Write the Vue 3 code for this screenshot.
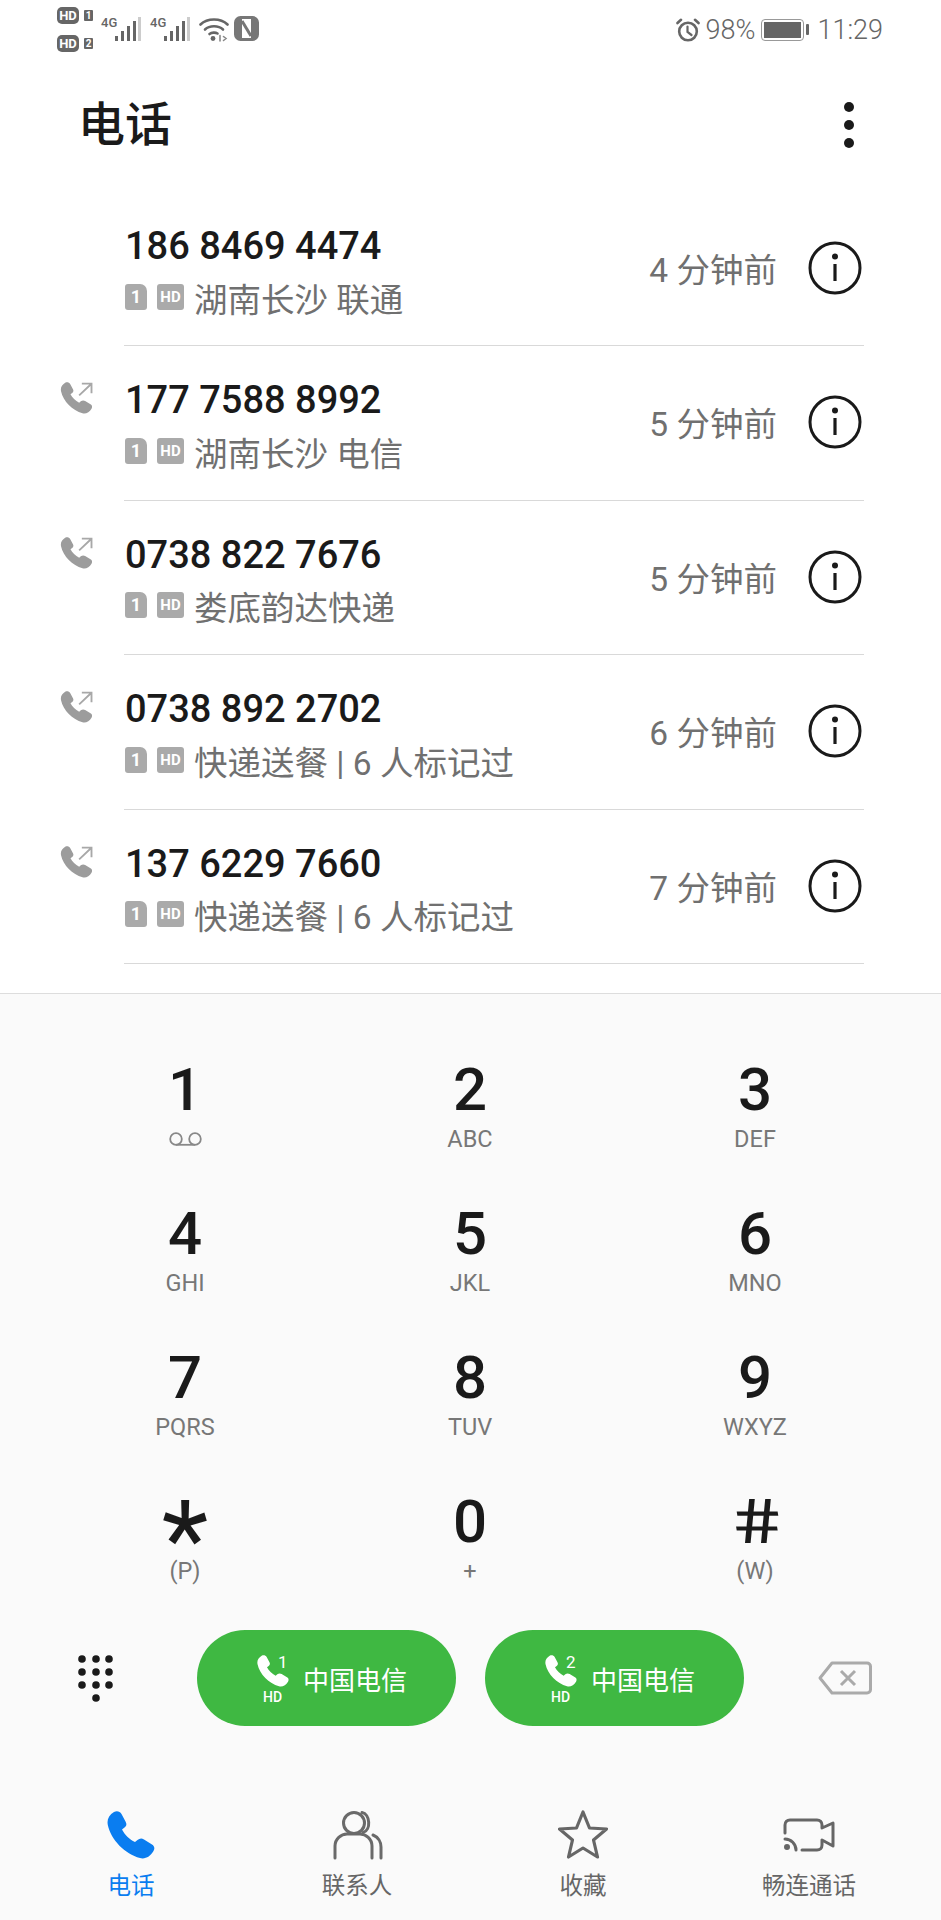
<template>
  <div class="page">
    <div class="status">
      <div class="status-left">
        <div class="hd-col">
          <div class="hd-line"><span class="hd-pill">HD</span><span class="hd-num">1</span></div>
          <div class="hd-line"><span class="hd-pill">HD</span><span class="hd-num">2</span></div>
        </div>
        <div v-for="n in 2" :key="n" class="signal">
          <span class="signal-label">4G</span>
          <svg width="26" height="24" viewBox="0 0 26 24">
            <rect x="0" y="19" width="3" height="5" fill="#666" />
            <rect x="6" y="14" width="3" height="10" fill="#666" />
            <rect x="12" y="9" width="3" height="15" fill="#666" />
            <rect x="18" y="4" width="3" height="20" fill="#666" />
            <rect x="23" y="0" width="3" height="24" fill="#ccc" />
          </svg>
        </div>
        <svg class="wifi" width="30" height="25" viewBox="0 0 30 25" fill="none" stroke="#666" stroke-width="2.6" stroke-linecap="round">
          <path d="M1.5 7.5C8.5 .8 21.5 .8 28.5 7.5" />
          <path d="M6 12.5C10.5 8.2 19.5 8.2 24 12.5" />
          <path d="M10.5 17C12.8 15.2 16.5 15.2 18.5 16.5" />
          <circle cx="14" cy="21.5" r="2.4" fill="#666" stroke="none" />
          <path d="M21 18.5V24M24.5 19.5L27 21.5L24.5 23.5" stroke-width="1.6" stroke="#888" />
        </svg>
        <svg class="nfc" width="25" height="25" viewBox="0 0 25 25" fill="none">
          <rect x="1.5" y="1.5" width="22" height="22" rx="5" stroke="#777" stroke-width="3" />
          <rect x="3" y="3" width="5" height="19" fill="#777" />
          <rect x="17" y="3" width="5" height="19" fill="#777" />
          <path d="M8 5L17 20" stroke="#777" stroke-width="3" />
        </svg>
      </div>
      <div class="status-right">
        <svg width="24" height="24" viewBox="0 0 24 24" fill="none" stroke="#666" stroke-width="2.6" stroke-linecap="round">
          <circle cx="12" cy="13.5" r="8.8" />
          <path d="M11.5 8.5V14L15.5 17" stroke-width="2.2" />
          <path d="M1.5 5L5 1.8M22.5 5L19 1.8" />
        </svg>
        <span class="pct">98%</span>
        <div class="battery"><div class="battery-fill" /></div>
        <span class="clock">11:29</span>
      </div>
    </div>

    <div class="top-bar">
      <div class="title">电话</div>
      <div class="more"><i /><i /><i /></div>
    </div>

    <div class="list">
      <div v-for="(c, i) in calls" :key="c.num" class="row">
        <div class="lead">
          <svg v-if="i > 0" width="33" height="32" viewBox="0 0 48 48" fill="none">
            <path :d="handset" fill="#9c9c9c" />
            <path d="M28 20L46 3M32 2.5H46.5V17" stroke="#a8a8a8" stroke-width="2.8" />
          </svg>
        </div>
        <div class="main">
          <div class="num">{{ c.num }}</div>
          <div class="sub">
            <span class="sim">1</span>
            <span class="hd-tag">HD</span>
            <span class="place">{{ c.place }}</span>
          </div>
        </div>
        <div class="time">{{ c.time }}</div>
        <svg class="info" width="54" height="54" viewBox="0 0 54 54" fill="none">
          <circle cx="27" cy="27" r="25" stroke="#1a1a1a" stroke-width="3" />
          <circle cx="27" cy="15.5" r="3" fill="#1a1a1a" />
          <path d="M27 23V40" stroke="#1a1a1a" stroke-width="3.2" />
        </svg>
      </div>
    </div>

    <div class="bottom">
      <div class="keys">
        <div v-for="k in keys" :key="k.d" class="key">
          <div class="digit" :class="{ star: k.d === '*', hash: k.d === '#' }">{{ k.d }}</div>
          <div class="letters">
            <svg v-if="k.d === '1'" width="33" height="14" viewBox="0 0 33 14" fill="none" stroke="#888" stroke-width="1.8">
              <circle cx="7" cy="7" r="5.8" />
              <circle cx="26" cy="7" r="5.8" />
              <path d="M7 12.8H26" />
            </svg>
            <template v-else>{{ k.l }}</template>
          </div>
        </div>
      </div>

      <div class="actions">
        <svg class="dial" width="35" height="48" viewBox="0 0 35 48" fill="#1a1a1a">
          <template v-for="y in [5, 18, 31]" :key="y">
            <circle cx="4" :cy="y" r="3.8" />
            <circle cx="18" :cy="y" r="3.8" />
            <circle cx="31" :cy="y" r="3.8" />
          </template>
          <circle cx="18" cy="44" r="3.8" />
        </svg>
        <div class="call-btns">
          <div v-for="s in ['1', '2']" :key="s" class="call-btn">
            <div class="call-icon">
              <svg width="32" height="32" viewBox="0 0 48 48">
                <path :d="handset" fill="#fff" />
              </svg>
              <span class="call-sim">{{ s }}</span>
              <span class="call-hd">HD</span>
            </div>
            <span class="carrier">中国电信</span>
          </div>
        </div>
        <svg class="backspace" width="54" height="34" viewBox="0 0 54 34" fill="none" stroke="#aaa" stroke-width="3" stroke-linejoin="round">
          <path d="M14 2H49C51 2 52.5 3.5 52.5 5.5V28.5C52.5 30.5 51 32 49 32H14L2 17Z" />
          <path d="M23 10L37 24M37 10L23 24" />
        </svg>
      </div>

      <div class="tabs">
        <div v-for="t in tabs" :key="t.name" class="tab" :class="{ on: t.on }">
          <div class="tab-icon">
            <svg v-if="t.name === '电话'" width="48" height="48" viewBox="0 0 48 48">
              <path :d="handset" fill="#0a7df0" />
            </svg>
            <svg v-else-if="t.name === '联系人'" class="people" width="50" height="50" viewBox="0 0 50 50" fill="none" stroke="#6a6a6a" stroke-width="3" stroke-linecap="round">
              <circle cx="21" cy="13" r="10.5" />
              <path d="M29 2.5C37 4 38.5 20 30 22.5" />
              <path d="M2 48V36C2 29 8 24 14 24H27C33 24 39 29 39 36V48" />
              <path d="M40 25C45 27 48 32 48 37V48" />
            </svg>
            <svg v-else-if="t.name === '收藏'" width="50" height="50" viewBox="0 0 50 50" fill="none" stroke="#666" stroke-width="3.2" stroke-linejoin="round">
              <path d="M25 2L31.5 18L48.5 19L35.5 30L39.5 47L25 38L10.5 47L14.5 30L1.5 19L18.5 18Z" />
            </svg>
            <svg v-else width="52" height="34" viewBox="0 0 52 34" fill="none" stroke="#666" stroke-width="3" stroke-linecap="round" stroke-linejoin="round">
              <path d="M2 15V7C2 4 4 2 7 2H34C37 2 39 4 39 7V10L50 5V28L39 22V27C39 30 37 32 34 32H19" />
              <path d="M2 21C8 21 13 26 13 32" />
              <circle cx="4" cy="29" r="1.5" fill="#666" />
            </svg>
          </div>
          <div class="tab-name">{{ t.name }}</div>
        </div>
      </div>
    </div>
  </div>
</template>

<script setup>
const handset =
  "M7 1C10 -.5 13 .5 14.5 3L18.5 10.5C20 13 19.5 15 17.5 16.5L15 18.5C17.5 23.5 22.5 28.5 28 31L30.5 29C32.5 27.5 34.5 27 37 28.5L45 33.5C47.5 35 48 37.5 46.5 40C43.5 45.5 38 48.5 33 47C18 43 4 29 .8 14C-.3 8.5 2 4 7 1Z";

const calls = [
  { num: "186 8469 4474", place: "湖南长沙 联通", time: "4 分钟前" },
  { num: "177 7588 8992", place: "湖南长沙 电信", time: "5 分钟前" },
  { num: "0738 822 7676", place: "娄底韵达快递", time: "5 分钟前" },
  { num: "0738 892 2702", place: "快递送餐 | 6 人标记过", time: "6 分钟前" },
  { num: "137 6229 7660", place: "快递送餐 | 6 人标记过", time: "7 分钟前" },
];

const keys = [
  { d: "1", l: "" },
  { d: "2", l: "ABC" },
  { d: "3", l: "DEF" },
  { d: "4", l: "GHI" },
  { d: "5", l: "JKL" },
  { d: "6", l: "MNO" },
  { d: "7", l: "PQRS" },
  { d: "8", l: "TUV" },
  { d: "9", l: "WXYZ" },
  { d: "*", l: "(P)" },
  { d: "0", l: "+" },
  { d: "#", l: "(W)" },
];

const tabs = [
  { name: "电话", on: true },
  { name: "联系人" },
  { name: "收藏" },
  { name: "畅连通话" },
];
</script>

<style>
body {
  background: #fff;
}
</style>

<style scoped>
.page {
  width: 941px;
  height: 1920px;
  display: flex;
  flex-direction: column;
  overflow: hidden;
  background: #fff;
  font-family: Roboto, "Noto Sans CJK SC", sans-serif;
}

.status {
  height: 60px;
  display: flex;
  justify-content: space-between;
  padding: 0 58px 0 57px;
}

.status-left {
  display: flex;
  align-items: flex-start;
  gap: 7px;
  padding-top: 16px;
}

.hd-col {
  width: 37px;
  margin-top: -9px;
  display: flex;
  flex-direction: column;
  gap: 11px;
}

.hd-line {
  display: flex;
  align-items: center;
  gap: 5px;
  height: 17px;
}

.hd-pill {
  width: 22px;
  height: 17px;
  border-radius: 5px;
  background: #666;
  color: #fff;
  font-size: 13px;
  font-weight: 700;
  line-height: 17px;
  text-align: center;
}

.hd-num {
  width: 9px;
  height: 11px;
  background: #666;
  border-radius: 1px;
  color: #fff;
  font-size: 10px;
  font-weight: 700;
  line-height: 11px;
  text-align: center;
}

.signal {
  display: flex;
  width: 40px;
  margin-right: 2px;
  padding-top: 1px;
}

.signal svg {
  margin-left: -1px;
}

.signal-label {
  width: 15px;
  font-size: 13px;
  line-height: 12px;
  color: #666;
  font-weight: 500;
}

.wifi {
  margin-top: 1px;
}

.nfc {
  margin-left: -2px;
}

.status-right {
  display: flex;
  align-items: center;
  height: 60px;
  color: #666;
}

.pct {
  margin-left: 6px;
  font-size: 27px;
  font-weight: 300;
}

.battery {
  position: relative;
  width: 43px;
  height: 22px;
  margin: 0 9px 0 6px;
  border: 1.5px solid #999;
  border-radius: 4px;
  padding: 2px;
  box-sizing: border-box;
}

.battery::after {
  content: "";
  position: absolute;
  right: -6px;
  top: 4px;
  width: 3px;
  height: 11px;
  background: #666;
  border-radius: 1px;
}

.battery-fill {
  height: 100%;
  background: #666;
}

.clock {
  margin-left: 4px;
  font-size: 27px;
  font-weight: 300;
}

.top-bar {
  height: 132px;
  display: flex;
  align-items: center;
  justify-content: space-between;
  padding: 0 87px 2px 78px;
  box-sizing: border-box;
}

.title {
  margin-top: -9px;
  font-size: 47px;
  font-weight: 500;
  color: #1a1a1a;
}

.more {
  display: flex;
  flex-direction: column;
  gap: 8px;
}

.more i {
  width: 10px;
  height: 10px;
  border-radius: 50%;
  background: #1a1a1a;
}

.list {
  flex: 1;
}

.row {
  position: relative;
  display: flex;
  height: 154.4px;
  box-sizing: border-box;
  padding-left: 60px;
  padding-right: 79px;
}

.row::after {
  content: "";
  position: absolute;
  left: 124px;
  right: 77px;
  bottom: 0;
  height: 1px;
  background: #d9d9d9;
}

.lead {
  width: 65px;
  padding-top: 36px;
}

.main {
  flex: 1;
  padding-top: 31px;
}

.num {
  height: 46px;
  line-height: 46px;
  font-size: 38px;
  font-weight: 500;
  color: #1a1a1a;
}

.sub {
  display: flex;
  align-items: center;
  height: 48px;
  margin-top: 4px;
}

.sim {
  width: 22px;
  height: 26px;
  margin-top: -1px;
  background: #aaa;
  border-radius: 3px 7px 3px 3px;
  color: #fff;
  font-size: 18px;
  font-weight: 700;
  line-height: 26px;
  text-align: center;
}

.hd-tag {
  width: 27px;
  height: 26px;
  margin: -1px 0 0 10px;
  background: #aaa;
  border-radius: 3px;
  color: #fff;
  font-size: 15px;
  font-weight: 700;
  line-height: 26px;
  text-align: center;
}

.place {
  margin-left: 10px;
  font-size: 33.5px;
  color: #707070;
  font-weight: 400;
}

.time {
  padding-top: 57px;
  font-size: 33.5px;
  line-height: 44px;
  color: #707070;
  font-weight: 400;
}

.info {
  margin: 49px 0 0 31px;
  flex-shrink: 0;
}

.bottom {
  height: 927px;
  flex-shrink: 0;
  background: #fafafa;
  border-top: 1px solid #ddd;
  box-sizing: border-box;
}

.keys {
  display: grid;
  grid-template-columns: repeat(3, 285px);
  row-gap: 46px;
  padding: 61px 0 0 42.5px;
}

.key {
  text-align: center;
}

.digit {
  height: 70px;
  line-height: 70px;
  font-size: 60px;
  font-weight: 500;
  color: #1a1a1a;
}

.digit.star {
  font-size: 108px;
  font-weight: 400;
  line-height: 106px;
}

.digit.hash {
  font-size: 62px;
  font-weight: 400;
  transform: skewX(9deg) scaleX(1.3);
}

.letters {
  display: flex;
  align-items: center;
  justify-content: center;
  height: 28px;
  font-size: 23.5px;
  font-weight: 400;
  color: #777;
}

.actions {
  display: flex;
  align-items: center;
  margin-top: 45px;
  padding-left: 78px;
  height: 96px;
}

.call-btns {
  display: flex;
  gap: 29px;
  margin-left: 84px;
}

.call-btn {
  display: flex;
  align-items: center;
  width: 259px;
  height: 96px;
  padding-left: 60px;
  box-sizing: border-box;
  border-radius: 48px;
  background: #3fb842;
  color: #fff;
}

.call-icon {
  position: relative;
  width: 46px;
  height: 48px;
  margin-top: 2px;
}

.call-sim {
  position: absolute;
  left: 21px;
  top: -1px;
  font-size: 17px;
  line-height: 16px;
}

.call-hd {
  position: absolute;
  left: 6px;
  top: 35px;
  font-size: 14px;
  line-height: 14px;
  font-weight: 500;
}

.carrier {
  font-size: 26px;
  font-weight: 400;
}

.backspace {
  margin-left: 74px;
}

.tabs {
  display: grid;
  grid-template-columns: repeat(4, 226px);
  padding: 84px 0 0 18px;
}

.tab {
  text-align: center;
  color: #666;
}

.tab.on {
  color: #0a7df0;
}

.tab-icon {
  display: flex;
  align-items: center;
  justify-content: center;
  height: 50px;
}

.people {
  margin-left: 2px;
}

.tab-name {
  margin-top: 12px;
  font-size: 23.5px;
  line-height: 28px;
}
</style>
